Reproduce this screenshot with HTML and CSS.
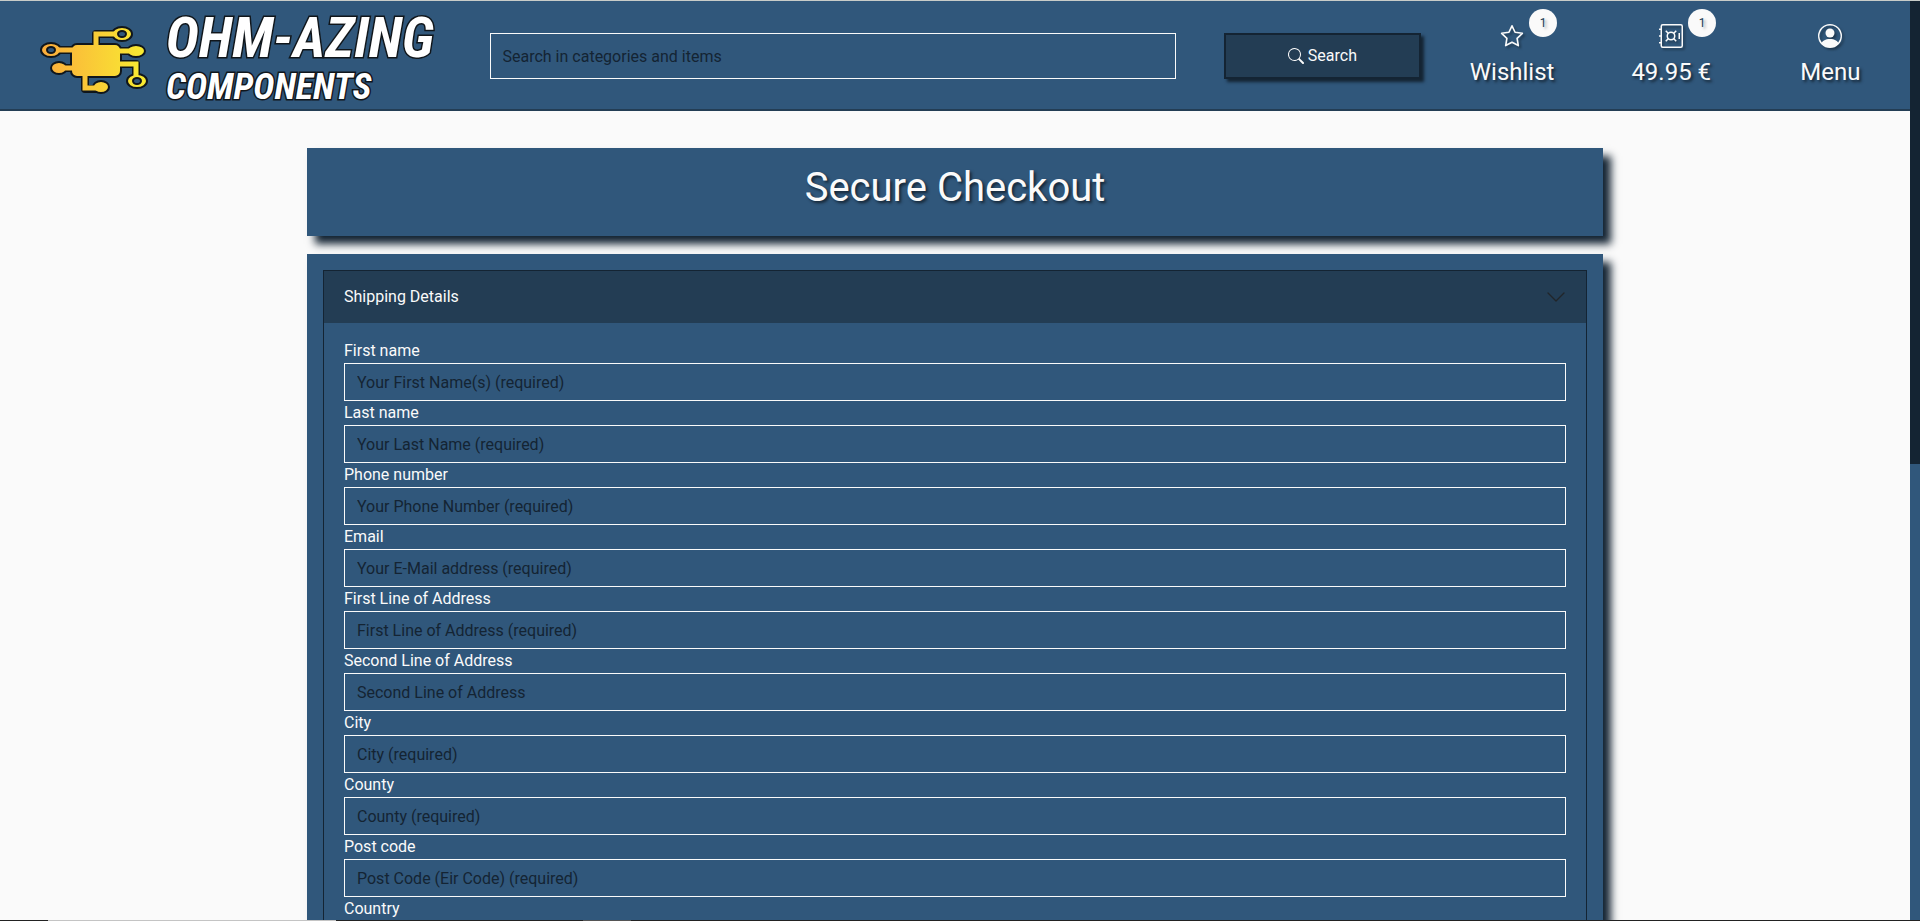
FILE: index.html
```
<!DOCTYPE html>
<html lang="en">
<head>
<meta charset="utf-8">
<meta name="viewport" content="width=device-width, initial-scale=1">
<title>Secure Checkout</title>
<link rel="stylesheet" href="styles.css">
</head>
<body>
<div class="viewport">
  <div class="page">
    <header class="site-header">
      <a class="logo" href="#">
        <svg class="logo-mark" viewBox="0 0 110 70" aria-hidden="true">
          <defs>
            <linearGradient id="gold" gradientUnits="userSpaceOnUse" x1="0" y1="0" x2="110" y2="0">
              <stop offset="0" stop-color="#fbab3c"/>
              <stop offset="1" stop-color="#f8ee31"/>
            </linearGradient>
          </defs>
          <g fill="none" stroke="#10161b" stroke-width="8" stroke-linejoin="round">
            <path d="M17 26H34M23 44H34M56 20V10H74M80 27H92M80 40H96V52M45 52V65H58"/>
          </g>
          <g fill="url(#gold)" stroke="#10161b" stroke-width="2">
            <rect x="31" y="20" width="50" height="33" rx="6"/>
            <ellipse cx="11" cy="26" rx="10" ry="7"/>
            <ellipse cx="19" cy="44" rx="8" ry="6"/>
            <ellipse cx="82" cy="10" rx="10" ry="7"/>
            <ellipse cx="96" cy="27" rx="9" ry="6"/>
            <ellipse cx="97" cy="57" rx="10" ry="7"/>
            <ellipse cx="61" cy="63" rx="8" ry="6"/>
          </g>
          <g fill="none" stroke="url(#gold)" stroke-width="5">
            <path d="M18 26.010H36M22 44.010H36M56 24V10H75M78 27.010H94M78 40H96V52M45 50V64H59"/>
          </g>
          <g fill="#30577b" stroke="#10161b" stroke-width="2">
            <ellipse cx="11" cy="26" rx="4" ry="3"/>
            <ellipse cx="82" cy="10" rx="4" ry="3"/>
            <ellipse cx="97" cy="57" rx="4" ry="3"/>
          </g>
        </svg>
        <span class="logo-text">
          <span class="logo-name">OHM-AZING</span>
          <span class="logo-sub">COMPONENTS</span>
        </span>
      </a>
      <form class="search">
        <input class="field search-field" type="search" aria-label="Search" placeholder="Search in categories and items">
        <button class="search-button" type="submit">
          <svg class="icon-small" viewBox="0 0 16 16" aria-hidden="true"><path d="M11.742 10.344a6.500 6.500 0 1 0-1.397 1.398h-.001q.044.060.098.115l3.850 3.850a1 1 0 0 0 1.415-1.414l-3.850-3.850a1 1 0 0 0-.115-.1zM12 6.500a5.500 5.500 0 1 1-11 0 5.500 5.500 0 0 1 11 0"/></svg>
          Search
        </button>
      </form>
      <a class="nav-item" href="#">
        <span class="icon-wrap">
          <svg class="icon" viewBox="0 0 16 16" aria-hidden="true"><path d="M8 1.200 10.050 5.500 14.900 6.200 11.400 9.600 12.200 14.400 8 12.200 3.800 14.400 4.600 9.600 1.100 6.200 5.950 5.500Z" fill="none" stroke="currentColor" stroke-width="1.100" stroke-linejoin="round"/></svg>
          <span class="badge">1</span>
        </span>
        <span>Wishlist</span>
      </a>
      <a class="nav-item" href="#">
        <span class="icon-wrap">
          <svg class="icon" viewBox="0 0 16 16" aria-hidden="true">
            <g fill="none" stroke="currentColor">
              <rect x="1.500" y=".5" width="14" height="15" rx="1"/>
              <path d="M0 3.500h2M0 8h2M0 12.500h2M13.500 6v4"/>
              <circle cx="8" cy="8" r="2.500"/>
              <path d="M4.500 4.500 6.300 6.300M11.500 4.500 9.700 6.300M4.500 11.500 6.300 9.700M11.500 11.500 9.700 9.700"/>
            </g>
          </svg>
          <span class="badge">1</span>
        </span>
        <span>49.95 €</span>
      </a>
      <a class="nav-item" href="#">
        <span class="icon-wrap">
          <svg class="icon" viewBox="0 0 16 16" aria-hidden="true"><path d="M11 6a3 3 0 1 1-6 0 3 3 0 0 1 6 0"/><path fill-rule="evenodd" d="M0 8a8 8 0 1 1 16 0A8 8 0 0 1 0 8m8-7a7 7 0 0 0-5.468 11.370C3.242 11.226 4.805 10 8 10s4.757 1.225 5.468 2.370A7 7 0 0 0 8 1"/></svg>
        </span>
        <span>Menu</span>
      </a>
    </header>

    <main class="container">
      <section class="panel title-panel"><h1 class="title">Secure Checkout</h1></section>
      <section class="panel form-panel">
        <div class="accordion">
          <button class="accordion-button" type="button" aria-expanded="true">
            Shipping Details
            <svg class="chevron" viewBox="0 0 20 20" aria-hidden="true"><path d="m2 6 8 8 8-8" fill="none" stroke="#212529" stroke-width="1.300" stroke-linecap="round" stroke-linejoin="round"/></svg>
          </button>
          <form class="accordion-body">
            <label class="label" for="first">First name</label>
            <input class="field" id="first" type="text" placeholder="Your First Name(s) (required)">
            <label class="label" for="last">Last name</label>
            <input class="field" id="last" type="text" placeholder="Your Last Name (required)">
            <label class="label" for="phone">Phone number</label>
            <input class="field" id="phone" type="tel" placeholder="Your Phone Number (required)">
            <label class="label" for="email">Email</label>
            <input class="field" id="email" type="email" placeholder="Your E-Mail address (required)">
            <label class="label" for="line1">First Line of Address</label>
            <input class="field" id="line1" type="text" placeholder="First Line of Address (required)">
            <label class="label" for="line2">Second Line of Address</label>
            <input class="field" id="line2" type="text" placeholder="Second Line of Address">
            <label class="label" for="city">City</label>
            <input class="field" id="city" type="text" placeholder="City (required)">
            <label class="label" for="county">County</label>
            <input class="field" id="county" type="text" placeholder="County (required)">
            <label class="label" for="post">Post code</label>
            <input class="field" id="post" type="text" placeholder="Post Code (Eir Code) (required)">
            <label class="label" for="country">Country</label>
            <input class="field" id="country" type="text">
          </form>
        </div>
      </section>
    </main>
  </div>
  <div class="scroll-track" aria-hidden="true"><div class="scroll-thumb"></div></div>
</div>
<div class="bottom-edge" aria-hidden="true"></div>
</body>
</html>
```
FILE: styles.css
```
:root {
  --blue: #30577b;
  --navy: #233d54;
  --ink: #142433;
  --light: #fafafa;
}
* { box-sizing: border-box; }
body {
  margin: 0;
  height: 100vh;
  display: flex;
  flex-direction: column;
  overflow: hidden;
  background: var(--light);
  color: var(--light);
  font: 16px/24px Roboto, "Liberation Sans", sans-serif;
}
.viewport {
  flex: 1;
  min-height: 0;
  display: flex;
  border-top: 1px solid #c8ccc8;
}
.page {
  flex: 1;
  min-width: 0;
  overflow-x: hidden;
  overflow-y: auto;
  scrollbar-width: none;
}
.scroll-track { width: 10px; background: var(--blue); }
.scroll-thumb { height: calc(50% + 3px); background: var(--ink); }
.bottom-edge {
  height: 1px;
  background: linear-gradient(90deg, #222 48px, #c4c4c4 48px 336px, #222 336px 583px, #555 583px 631px, #222 631px);
}

.site-header {
  display: grid;
  grid-template-columns: 3fr 6fr 1fr 1fr 1fr;
  align-items: center;
  min-height: 110px;
  padding-top: 2px;
  background: var(--blue);
  border-bottom: 2px solid var(--navy);
}
.logo {
  display: flex;
  align-items: center;
  gap: 16px;
  padding-top: 6px;
  padding-left: 40px;
  color: #fff;
  text-decoration: none;
}
.logo-mark { width: 110px; flex: none; }
.logo-text {
  display: flex;
  flex-direction: column;
  font-family: "Liberation Sans Narrow", "Roboto Condensed", "Liberation Sans", sans-serif;
  font-weight: 700;
  font-style: italic;
  white-space: nowrap;
  -webkit-text-stroke: 3px #10161b;
  paint-order: stroke fill;
}
.logo-name { font-size: 56px; line-height: 56px; }
.logo-sub { font-size: 36px; line-height: 42px; }

.search {
  display: grid;
  grid-template-columns: 7fr 2fr;
  gap: 48px;
  padding: 0 12px;
}
.field {
  display: block;
  width: 100%;
  height: 38px;
  margin: 0;
  padding: 0 12px;
  border: 1px solid var(--light);
  border-radius: 0;
  outline: 0;
  background: var(--blue);
  color: var(--light);
  font: inherit;
  appearance: none;
}
.field::placeholder { color: var(--ink); opacity: 1; }
.search-field { height: 46px; }
.search-button {
  display: flex;
  align-items: center;
  justify-content: center;
  gap: 4px;
  border: 2px solid var(--ink);
  background: var(--navy);
  color: var(--light);
  font: inherit;
  box-shadow: 3px 3px 3px var(--ink);
}
.icon-small { width: 16px; height: 16px; fill: currentColor; }

.nav-item {
  display: flex;
  flex-direction: column;
  align-items: center;
  gap: 8px;
  color: var(--light);
  font-size: 24px;
  line-height: 32px;
  text-decoration: none;
  text-shadow: 2px 2px 3px var(--ink);
}
.icon-wrap { position: relative; display: flex; }
.icon {
  width: 24px;
  height: 24px;
  fill: currentColor;
  filter: drop-shadow(2px 2px 1px rgba(20, 36, 51, .6));
}
.badge {
  position: absolute;
  left: 29px;
  bottom: 11px;
  width: 28px;
  height: 28px;
  border-radius: 50%;
  background: var(--light);
  color: var(--navy);
  font-size: 12px;
  line-height: 28px;
  text-align: center;
  text-shadow: 2px 2px 3px rgba(20, 36, 51, .4);
}

.container {
  display: grid;
  gap: 18px;
  max-width: 1320px;
  margin: 0 auto;
  padding: 37px 12px;
}
.panel {
  background: var(--blue);
  box-shadow: 8px 8px 8px var(--ink);
}
.title-panel { padding: 16px 16px 24px; }
.title {
  margin: 0;
  font-size: 40px;
  line-height: 48px;
  font-weight: 400;
  text-align: center;
  text-shadow: 2px 2px 3px var(--ink);
}
.form-panel { padding: 16px; }
.accordion { border: 1px solid var(--ink); }
.accordion-button {
  display: flex;
  align-items: center;
  justify-content: space-between;
  width: 100%;
  padding: 14px 20px;
  border: 0;
  background: var(--navy);
  color: var(--light);
  font: inherit;
}
.chevron { width: 20px; height: 20px; }
.accordion-body { padding: 16px 20px; }
.label { display: block; }
```
